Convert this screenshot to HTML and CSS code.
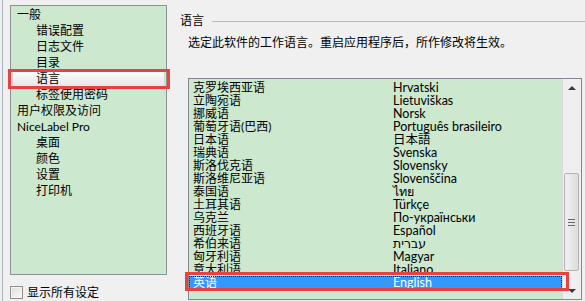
FILE: index.html
```html
<!DOCTYPE html>
<html lang="zh-CN">
<head>
<meta charset="utf-8">
<title>选项 - 语言</title>
<link rel="stylesheet" href="styles.css">
</head>
<body>
<div class="window">
  <div class="left">
    <div class="tree">
      <div class="node">一般</div>
      <div class="node child">错误配置</div>
      <div class="node child">日志文件</div>
      <div class="node child">目录</div>
      <div class="node child selected"><span class="sel-bar">语言</span></div>
      <div class="node child">标签使用密码</div>
      <div class="node">用户权限及访问</div>
      <div class="node latin">NiceLabel Pro</div>
      <div class="node child">桌面</div>
      <div class="node child">颜色</div>
      <div class="node child">设置</div>
      <div class="node child">打印机</div>
    </div>
    <label class="showall"><span class="checkbox"></span><span>显示所有设定</span></label>
  </div>
  <div class="right">
    <div class="group-title"><span>语言</span><span class="rule"></span></div>
    <p class="desc">选定此软件的工作语言。重启应用程序后，所作修改将生效。</p>
    <div class="listbox">
      <div class="rows">
        <div class="row"><span class="c1">克罗埃西亚语</span><span class="c2">Hrvatski</span></div>
        <div class="row"><span class="c1">立陶宛语</span><span class="c2">Lietuviškas</span></div>
        <div class="row"><span class="c1">挪威语</span><span class="c2">Norsk</span></div>
        <div class="row"><span class="c1">葡萄牙语(巴西)</span><span class="c2">Português brasileiro</span></div>
        <div class="row"><span class="c1">日本语</span><span class="c2" lang="ja">日本語</span></div>
        <div class="row"><span class="c1">瑞典语</span><span class="c2">Svenska</span></div>
        <div class="row"><span class="c1">斯洛伐克语</span><span class="c2">Slovensky</span></div>
        <div class="row"><span class="c1">斯洛维尼亚语</span><span class="c2">Slovenščina</span></div>
        <div class="row"><span class="c1">泰国语</span><span class="c2" lang="th">ไทย</span></div>
        <div class="row"><span class="c1">土耳其语</span><span class="c2">Türkçe</span></div>
        <div class="row"><span class="c1">乌克兰</span><span class="c2">По-українськи</span></div>
        <div class="row"><span class="c1">西班牙语</span><span class="c2">Español</span></div>
        <div class="row"><span class="c1">希伯来语</span><span class="c2" lang="he">עברית</span></div>
        <div class="row"><span class="c1">匈牙利语</span><span class="c2">Magyar</span></div>
        <div class="row"><span class="c1">意大利语</span><span class="c2">Italiano</span></div>
        <div class="row selected"><span class="c1">英语</span><span class="c2">English</span></div>
      </div>
      <div class="scrollbar">
        <div class="arrow up"></div>
        <div class="track">
          <div class="thumb"><span class="grip"></span></div>
        </div>
        <div class="arrow down"></div>
      </div>
    </div>
  </div>
</div>
</body>
</html>
```

FILE: styles.css
```css
html, body {
  margin: 0;
  padding: 0;
  background: #f0f0f0;
}

body {
  font-family: Lato, "Noto Sans CJK SC", "DejaVu Sans", sans-serif;
  font-size: 12px;
  color: #000;
  overflow: hidden;
}

.window {
  display: flex;
  height: 301px;
  margin-left: 2px;
  border-left: 1px solid #a7b1bf;
  overflow: hidden;
}

/* ---------- left column ---------- */
.left {
  width: 177px;
  flex: none;
  display: flex;
  flex-direction: column;
}

.tree {
  box-sizing: border-box;
  margin: 5px 0 0 7px;
  width: 157px;
  height: 274px;
  background: #cce8cf;
  border: 1px solid #8e9191;
  padding-top: 1px;
}

.node {
  height: 16px;
  line-height: 16px;
  padding-left: 6px;
  white-space: nowrap;
}

.node.child {
  padding-left: 25px;
}

.node.selected {
  position: relative;
  padding-left: 0;
}

.sel-bar {
  display: block;
  box-sizing: border-box;
  height: 16px;
  margin: 0 1px;
  padding-left: 23px;
  line-height: 14px;
  border: 1px solid #d2d2d2;
  border-radius: 2px;
  background: linear-gradient(#fbfbfb, #e6e6e6);
}

.node.selected::after {
  content: "";
  position: absolute;
  left: -3px;
  top: -2px;
  width: 162px;
  height: 20px;
  box-sizing: border-box;
  border: 3px solid #e8413f;
}

.showall {
  display: flex;
  align-items: flex-start;
  gap: 4px;
  margin: 10px 0 0 7px;
  line-height: 16px;
}

.checkbox {
  box-sizing: border-box;
  width: 13px;
  height: 13px;
  margin-top: 1px;
  border: 1px solid #8f8f8f;
  background: linear-gradient(135deg, #dcdcdc, #fbfbfb);
  box-shadow: inset 0 0 0 1px #f4f4f4;
}

/* ---------- right column ---------- */
.right {
  flex: 1;
  min-width: 0;
  display: flex;
  flex-direction: column;
}

.group-title {
  display: flex;
  align-items: center;
  margin-top: 13px;
  height: 16px;
  line-height: 16px;
}

.group-title .rule {
  flex: 1;
  height: 0;
  margin-left: 8px;
  border-top: 1px solid #b9b9b9;
}

.desc {
  margin: 6px 0 0 8px;
  line-height: 16px;
  white-space: nowrap;
}

.listbox {
  box-sizing: border-box;
  display: flex;
  margin: 27px 0 0 8px;
  width: 394px;
  height: 222px;
  border: 1px solid #828790;
  background: #cce8cf;
}

.rows {
  flex: 1;
  padding-top: 2px;
}

.row {
  position: relative;
  display: flex;
  height: 13px;
  line-height: 13px;
  padding-left: 4px;
  white-space: nowrap;
}

.c1 {
  width: 200px;
  flex: none;
}

.c2 {
  font-size: 12.5px;
}

.row.selected {
  background: #3399ff;
  color: #fff;
  outline: 1px dotted #202020;
  outline-offset: -1px;
}

.row.selected::after {
  content: "";
  position: absolute;
  z-index: 2;
  left: -4px;
  top: -4px;
  width: 384px;
  height: 19px;
  box-sizing: border-box;
  border: 3px solid #e8413f;
}

.scrollbar {
  position: relative;
  width: 19px;
  flex: none;
  display: flex;
  flex-direction: column;
  background: #efefef;
  border-left: 1px solid #dadada;
  box-sizing: border-box;
}

.arrow {
  height: 17px;
  flex: none;
  position: relative;
}

.arrow::before {
  content: "";
  position: absolute;
  left: 5px;
  border-left: 4px solid transparent;
  border-right: 4px solid transparent;
}

.arrow.up::before {
  top: 7px;
  border-bottom: 4px solid #3a3a3a;
}

.arrow.down::before {
  top: 7px;
  border-top: 4px solid #3a3a3a;
}

.track {
  flex: 1;
  position: relative;
}

.thumb {
  position: absolute;
  left: 1px;
  right: 2px;
  top: 77px;
  height: 98px;
  box-sizing: border-box;
  border: 1px solid #b4b4b4;
  border-radius: 2px;
  background: linear-gradient(90deg, #f1f1f1, #dcdcdc);
  display: flex;
  align-items: center;
  justify-content: center;
}

.grip {
  width: 7px;
  height: 5px;
  border-top: 1px solid #666;
  border-bottom: 1px solid #666;
  position: relative;
}

.grip::before {
  content: "";
  position: absolute;
  left: 0;
  right: 0;
  top: 2px;
  border-top: 1px solid #666;
}
```
